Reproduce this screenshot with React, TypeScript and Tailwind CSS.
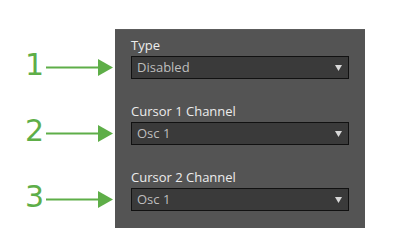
import React from "react";

const Arrow = () => (
  <svg width="67" height="17" viewBox="0 0 67 17" className="block">
    <line x1="0" y1="8.5" x2="54" y2="8.5" stroke="#5eae48" strokeWidth="2" />
    <polygon points="52,0 67,8.5 52,17" fill="#5eae48" />
  </svg>
);

const Annotation = ({ n }: { n: string }) => (
  <div className="flex h-[23px] items-center">
    <span
      className="w-[21px] text-[30px] leading-none text-[#5eae48] -mt-[6px]"
      style={{ fontFamily: '"DejaVu Sans", sans-serif' }}
    >
      {n}
    </span>
    <Arrow />
  </div>
);

const Field = ({ label, value }: { label: string; value: string }) => (
  <div className="flex flex-col gap-[3px]">
    <div className="h-4 text-[13px] leading-4 text-[#ececec]">{label}</div>
    <div className="flex h-[23px] items-center justify-between border border-[#111] bg-[#3a3a3a] pl-[5px] pr-[6px]">
      <span className="text-[13px] text-[#bebebe]">{value}</span>
      <svg width="7" height="6" viewBox="0 0 7 6">
        <polygon points="0,0 7,0 3.5,6" fill="#d8d8d8" />
      </svg>
    </div>
  </div>
);

export default function App() {
  return (
    <div
      className="w-[400px] h-[250px] bg-white flex"
      style={{ fontFamily: '"Open Sans", "Noto Sans", sans-serif' }}
    >
      <div className="w-[115px] flex flex-col gap-[43px] pt-[56px] pl-[25px]">
        <Annotation n="1" />
        <Annotation n="2" />
        <Annotation n="3" />
      </div>
      <div className="mt-[29px] h-[199px] w-[250px] bg-[#545454] border-t border-[#5c5c5c] pt-[7px] px-4 flex flex-col gap-6">
        <Field label="Type" value="Disabled" />
        <Field label="Cursor 1 Channel" value="Osc 1" />
        <Field label="Cursor 2 Channel" value="Osc 1" />
      </div>
    </div>
  );
}
